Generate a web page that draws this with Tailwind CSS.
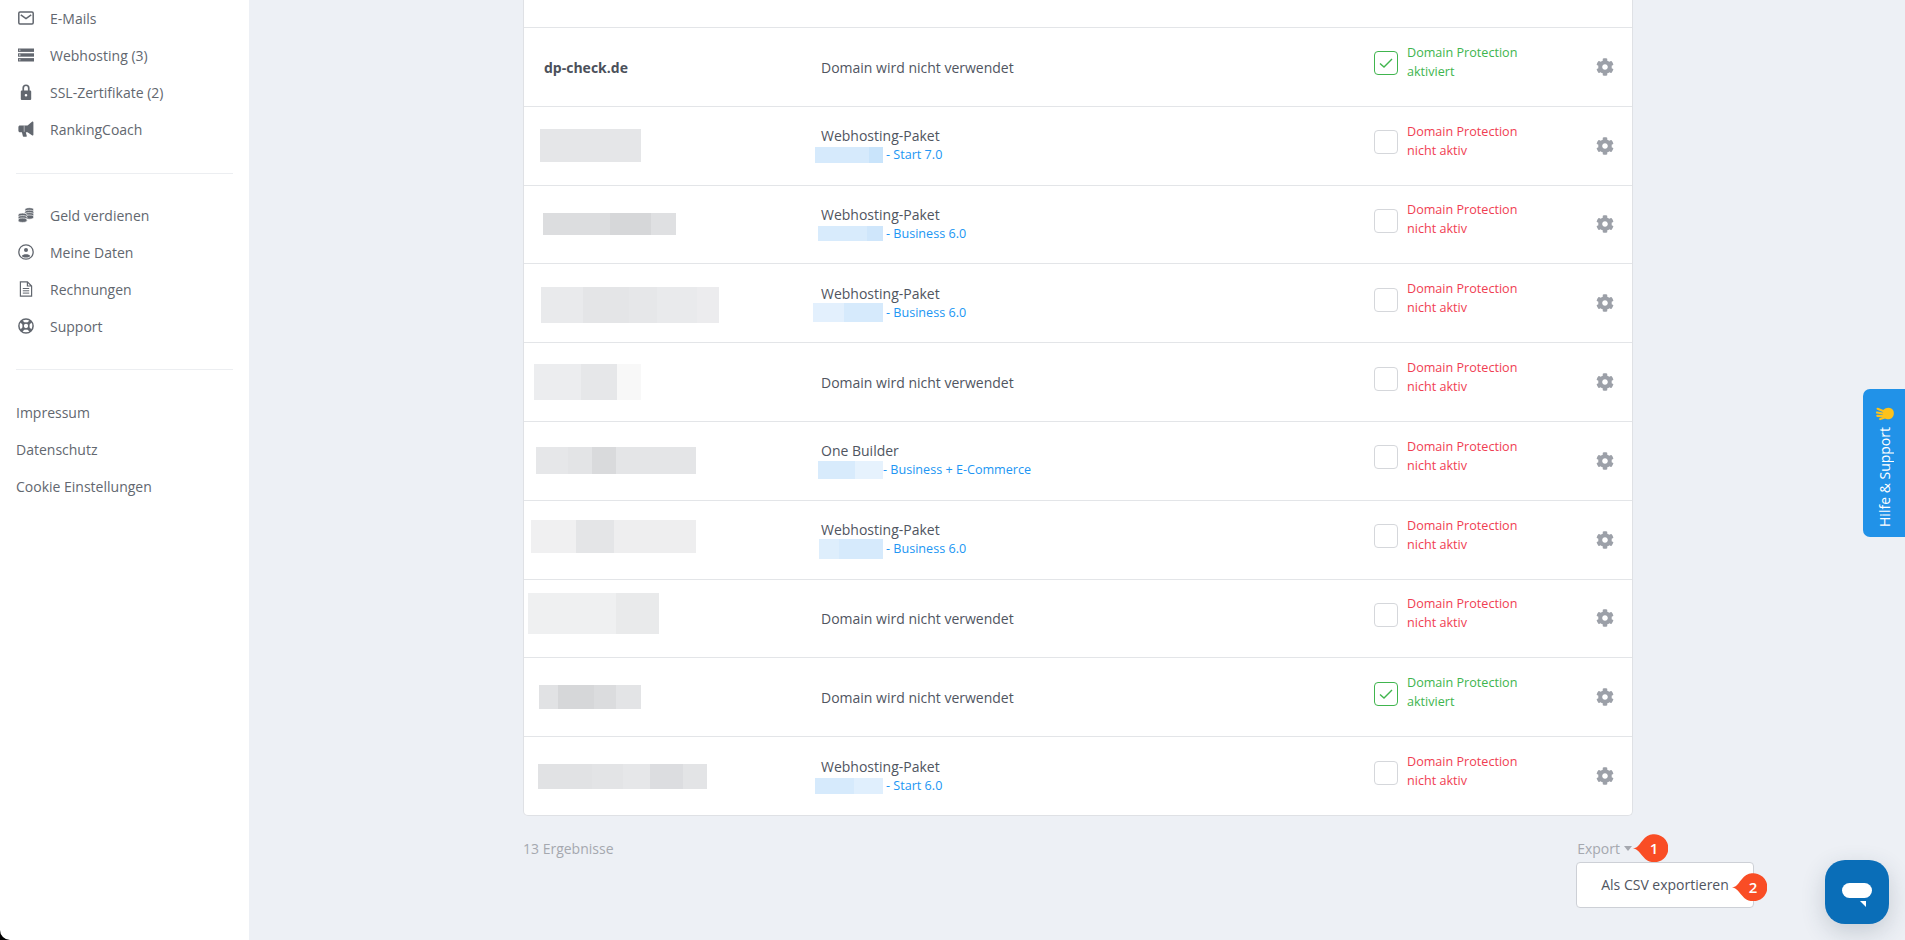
<!DOCTYPE html>
<html lang="de"><head><meta charset="utf-8"><title>Domains</title>
<script src="https://cdn.jsdelivr.net/npm/@tailwindcss/browser@4"></script></head>
<body class="m-0 overflow-hidden bg-[#edf0f5] font-['Open_Sans','Noto_Sans',sans-serif] text-[#50555f]">
<svg class="absolute h-0 w-0"><defs><symbol id="gear" viewBox="0 0 512 512"><path d="M487.400 315.700l-42.600-24.600c4.300-23.200 4.300-47 0-70.200l42.600-24.600c4.900-2.800 7.100-8.600 5.500-14-11.100-35.600-30-67.800-54.700-94.600-3.800-4.100-10-5.100-14.800-2.300L380.800 110c-17.900-15.400-38.500-27.300-60.800-35.100V25.800c0-5.600-3.900-10.500-9.400-11.700-36.700-8.200-74.300-7.800-109.200 0-5.500 1.200-9.400 6.100-9.400 11.700V75c-22.200 7.900-42.800 19.800-60.800 35.100L88.700 85.500c-4.900-2.800-11-1.900-14.800 2.300-24.700 26.700-43.600 58.900-54.700 94.600-1.700 5.400.6 11.200 5.500 14L67.300 221c-4.300 23.200-4.300 47 0 70.200l-42.600 24.600c-4.900 2.800-7.100 8.600-5.500 14 11.100 35.600 30 67.800 54.700 94.600 3.800 4.100 10 5.100 14.800 2.300l42.600-24.600c17.900 15.400 38.500 27.300 60.800 35.100v49.200c0 5.600 3.900 10.500 9.400 11.700 36.700 8.200 74.300 7.800 109.200 0 5.500-1.200 9.400-6.100 9.400-11.700v-49.200c22.200-7.900 42.800-19.800 60.800-35.100l42.600 24.600c4.900 2.800 11 1.900 14.800-2.300 24.700-26.700 43.600-58.900 54.700-94.600 1.500-5.500-.7-11.300-5.600-14.100zM256 336c-44.100 0-80-35.900-80-80s35.900-80 80-80 80 35.900 80 80-35.900 80-80 80z"/></symbol></defs></svg>
<div class="relative flex h-[940px] w-[1905px] overflow-hidden">
  <aside class="w-[249px] shrink-0 bg-white px-4 pt-[0.5px] text-[14px] text-[#62676f]">
    <nav class="flex flex-col">
      <a class="flex h-[37px] items-center gap-4 pb-[2px]"><svg class="ml-0.5 h-4 w-4" viewBox="0 0 16 16" fill="none" stroke="#62676f" stroke-width="1.500"><rect x=".8" y="2" width="14.400" height="12" rx="1.200"/><path d="M2.800 4.800 8 8.600l5.200-3.800"/></svg>E-Mails</a>
      <a class="flex h-[37px] items-center gap-4 pb-[2px]"><svg class="ml-0.5 h-4 w-4" viewBox="0 0 16 16" fill="#62676f"><rect y="1.500" width="16" height="3.400"/><rect y="6.300" width="16" height="3.400"/><rect y="11.100" width="16" height="3.400"/><path d="M1 2.800h1.500v.8H1zM1 7.600h1.500v.8H1zM1 12.400h1.500v.8H1z" fill="#fff"/></svg>Webhosting (3)</a>
      <a class="flex h-[37px] items-center gap-4 pb-[2px]"><svg class="ml-0.5 h-4 w-4" viewBox="0 0 16 16" fill="#62676f"><path fill-rule="evenodd" d="M4.400 6.500V4a3.600 3.600 0 0 1 7.200 0v2.500h.6a1 1 0 0 1 1 1V15a1 1 0 0 1-1 1H3.800a1 1 0 0 1-1-1V7.500a1 1 0 0 1 1-1zm1.700 0h3.800V4a1.900 1.900 0 0 0-3.800 0zM8 10a1.300 1.300 0 1 0 0 2.600A1.300 1.300 0 0 0 8 10z"/></svg>SSL-Zertifikate (2)</a>
      <a class="flex h-[37px] items-center gap-4 pb-[2px]"><svg class="ml-0.5 h-4 w-4" viewBox="0 0 16 16" fill="#62676f"><path d="M14.300.6c.5-.2 1.100.1 1.100.7v12.500c0 .7-.6 1-1.100.7L9.500 11.200H7.800l1 3.800c.1.400-.2.700-.6.700H5.500c-.3 0-.5-.2-.6-.5l-1-4H2c-.9 0-1.600-.7-1.600-1.500V6c0-.8.7-1.500 1.600-1.500h7.500z"/><path d="M6.200 4.500v6.300" stroke="#fff" stroke-width=".5"/></svg>RankingCoach</a>
    </nav>
    <div class="mt-[24px] h-px bg-[#eceef1]"></div>
    <nav class="mt-[24px] flex flex-col">
      <a class="flex h-[37px] items-center gap-4 pb-[2px]"><svg class="ml-0.5 h-4 w-4" viewBox="0 0 16 16" fill="#62676f" stroke="#fff" stroke-width=".7"><ellipse cx="11.300" cy="3" rx="4.500" ry="2.300"/><ellipse cx="11.300" cy="5.300" rx="4.500" ry="2.100"/><ellipse cx="11.300" cy="7.700" rx="4.500" ry="2.100"/><ellipse cx="11.300" cy="10.100" rx="4.500" ry="2.100"/><ellipse cx="4.600" cy="8.300" rx="4.500" ry="2.200"/><ellipse cx="4.600" cy="10.700" rx="4.500" ry="2.100"/><ellipse cx="4.600" cy="13.200" rx="4.500" ry="2.200"/></svg>Geld verdienen</a>
      <a class="flex h-[37px] items-center gap-4 pb-[2px]"><svg class="ml-0.5 h-4 w-4" viewBox="0 0 16 16" fill="none" stroke="#62676f" stroke-width="1.300"><circle cx="8" cy="8" r="7.200"/><circle cx="8" cy="6" r="2" fill="#62676f" stroke="none"/><path d="M3.800 12c1-2.200 7.400-2.200 8.400 0-1.500 2-6.900 2-8.400 0z" fill="#62676f" stroke="none"/></svg>Meine Daten</a>
      <a class="flex h-[37px] items-center gap-4 pb-[2px]"><svg class="ml-0.5 h-4 w-4" viewBox="0 0 16 16" fill="none" stroke="#62676f" stroke-width="1.200"><path d="M2.400.8h7l4.200 4.200v10.200H2.400zM9.400.8V5h4.200"/><path d="M4.800 7.500h6.400M4.800 9.800h6.400M4.800 12.100h6.400" stroke-width="1"/></svg>Rechnungen</a>
      <a class="flex h-[37px] items-center gap-4 pb-[2px]"><svg class="ml-0.5 h-4 w-4" viewBox="0 0 16 16" fill="none" stroke="#62676f" stroke-width="1.500"><circle cx="8" cy="8" r="7.100"/><circle cx="8" cy="8" r="2.900"/><path d="M3 3l3 3M13 3l-3 3M3 13l3-3M13 13l-3-3" stroke-width="3"/></svg>Support</a>
    </nav>
    <div class="mt-[23.500px] h-px bg-[#eceef1]"></div>
    <nav class="mt-[24.500px] flex flex-col">
      <a class="flex h-[37px] items-center pb-[2px]">Impressum</a>
      <a class="flex h-[37px] items-center pb-[2px]">Datenschutz</a>
      <a class="flex h-[37px] items-center pb-[2px]">Cookie Einstellungen</a>
    </nav>
  </aside>

  <main class="flex-1 pl-[274px]">
    <section class="w-[1110px] rounded-b-[5px] border-x border-b border-[#dfe1e5] bg-white">
      <div class="h-[27px]"></div>

      <div class="grid h-[78.800px] grid-cols-[297px_553px_1fr_auto] items-center border-t border-[#e3e5e8] pr-[18px] text-[14px]">
        <b class="pl-[20px] pt-px font-bold text-[#4b505a]">dp-check.de</b>
        <span class="pt-px">Domain wird nicht verwendet</span>
        <div class="flex items-center gap-[9px] pb-[7px]"><span class="flex h-6 w-6 items-center justify-center rounded-[4px] border border-[#40b54e]"><svg class="h-[14px] w-[14px]" viewBox="0 0 14 14" fill="none" stroke="#40b54e" stroke-width="1.400"><path d="M1 7.500 5 11 13 3"/></svg></span><span class="pb-[3px] text-[12.600px] leading-[19px] text-[#40b54e]">Domain Protection<br>aktiviert</span></div>
        <svg class="h-[18px] w-[18px] fill-[#9ca0a8]"><use href="#gear"/></svg>
      </div>

      <div class="grid h-[78.800px] grid-cols-[297px_553px_1fr_auto] items-center border-t border-[#e3e5e8] pr-[18px] text-[14px]">
        <div class="ml-[16px] flex h-[33px] w-[101px]"><i class="flex-1 bg-[#e5e6e8]"></i></div>
        <div class="leading-[18px]">Webhosting-Paket<div class="-ml-[6px] mt-px flex h-[18px] items-center gap-[3px] text-[12.600px] text-[#2196f3]"><span class="flex h-4 w-[68px]"><i class="w-[54px] bg-[#d6eafc]"></i><i class="flex-1 bg-[#c9e4fb]"></i></span>- Start 7.0</div></div>
        <div class="flex items-center gap-[9px] pb-[7px]"><span class="h-6 w-6 rounded-[4px] border border-[#d5d7db]"></span><span class="pb-[3px] text-[12.600px] leading-[19px] text-[#f03e52]">Domain Protection<br>nicht aktiv</span></div>
        <svg class="h-[18px] w-[18px] fill-[#9ca0a8]"><use href="#gear"/></svg>
      </div>

      <div class="grid h-[78.800px] grid-cols-[297px_553px_1fr_auto] items-center border-t border-[#e3e5e8] pr-[18px] text-[14px]">
        <div class="ml-[19px] flex h-[22px] w-[133px]"><i class="w-[67px] bg-[#dcdddf]"></i><i class="w-[41px] bg-[#d6d7d9]"></i><i class="flex-1 bg-[#dfe0e2]"></i></div>
        <div class="leading-[18px]">Webhosting-Paket<div class="-ml-[3px] mt-px flex h-[18px] items-center gap-[3px] text-[12.600px] text-[#2196f3]"><span class="flex h-[15px] w-[65px]"><i class="w-[49px] bg-[#d8ebfc]"></i><i class="flex-1 bg-[#cfe6fb]"></i></span>- Business 6.0</div></div>
        <div class="flex items-center gap-[9px] pb-[7px]"><span class="h-6 w-6 rounded-[4px] border border-[#d5d7db]"></span><span class="pb-[3px] text-[12.600px] leading-[19px] text-[#f03e52]">Domain Protection<br>nicht aktiv</span></div>
        <svg class="h-[18px] w-[18px] fill-[#9ca0a8]"><use href="#gear"/></svg>
      </div>

      <div class="grid h-[78.800px] grid-cols-[297px_553px_1fr_auto] items-center border-t border-[#e3e5e8] pr-[18px] text-[14px]">
        <div class="ml-[17px] mt-[3px] flex h-[36px] w-[178px]"><i class="w-[42px] bg-[#e9eaec]"></i><i class="w-[46px] bg-[#e4e5e7]"></i><i class="w-[28px] bg-[#e6e7e9]"></i><i class="w-[40px] bg-[#e9eaec]"></i><i class="flex-1 bg-[#ececee]"></i></div>
        <div class="leading-[18px]">Webhosting-Paket<div class="-ml-[8px] mt-px flex h-[18px] items-center gap-[3px] text-[12.600px] text-[#2196f3]"><span class="flex h-[19px] w-[70px]"><i class="w-[31px] bg-[#e3f0fd]"></i><i class="flex-1 bg-[#d6eafc]"></i></span>- Business 6.0</div></div>
        <div class="flex items-center gap-[9px] pb-[7px]"><span class="h-6 w-6 rounded-[4px] border border-[#d5d7db]"></span><span class="pb-[3px] text-[12.600px] leading-[19px] text-[#f03e52]">Domain Protection<br>nicht aktiv</span></div>
        <svg class="h-[18px] w-[18px] fill-[#9ca0a8]"><use href="#gear"/></svg>
      </div>

      <div class="grid h-[78.800px] grid-cols-[297px_553px_1fr_auto] items-center border-t border-[#e3e5e8] pr-[18px] text-[14px]">
        <div class="ml-[10px] flex h-[36px] w-[107px]"><i class="w-[47px] bg-[#ecedef]"></i><i class="w-[36px] bg-[#e6e7e9]"></i><i class="flex-1 bg-[#f8f8f8]"></i></div>
        <span>Domain wird nicht verwendet</span>
        <div class="flex items-center gap-[9px] pb-[7px]"><span class="h-6 w-6 rounded-[4px] border border-[#d5d7db]"></span><span class="pb-[3px] text-[12.600px] leading-[19px] text-[#f03e52]">Domain Protection<br>nicht aktiv</span></div>
        <svg class="h-[18px] w-[18px] fill-[#9ca0a8]"><use href="#gear"/></svg>
      </div>

      <div class="grid h-[78.800px] grid-cols-[297px_553px_1fr_auto] items-center border-t border-[#e3e5e8] pr-[18px] text-[14px]">
        <div class="ml-[12px] flex h-[27px] w-[160px]"><i class="w-[32px] bg-[#e6e7e9]"></i><i class="w-[24px] bg-[#e3e4e6]"></i><i class="w-[24px] bg-[#d9dadc]"></i><i class="flex-1 bg-[#e4e5e7]"></i></div>
        <div class="leading-[18px]">One Builder<div class="-ml-[3px] mt-px flex h-[18px] items-center text-[12.600px] text-[#2196f3]"><span class="flex h-[18px] w-[65px]"><i class="w-[37px] bg-[#d8ebfc]"></i><i class="flex-1 bg-[#e6f2fd]"></i></span>- Business + E-Commerce</div></div>
        <div class="flex items-center gap-[9px] pb-[7px]"><span class="h-6 w-6 rounded-[4px] border border-[#d5d7db]"></span><span class="pb-[3px] text-[12.600px] leading-[19px] text-[#f03e52]">Domain Protection<br>nicht aktiv</span></div>
        <svg class="h-[18px] w-[18px] fill-[#9ca0a8]"><use href="#gear"/></svg>
      </div>

      <div class="grid h-[78.800px] grid-cols-[297px_553px_1fr_auto] items-center border-t border-[#e3e5e8] pr-[18px] text-[14px]">
        <div class="mb-[6px] ml-[7px] flex h-[33px] w-[165px]"><i class="w-[45px] bg-[#f0f0f1]"></i><i class="w-[38px] bg-[#e4e5e7]"></i><i class="flex-1 bg-[#eeeeef]"></i></div>
        <div class="leading-[18px]">Webhosting-Paket<div class="-ml-[2px] mt-px flex h-[18px] items-center gap-[3px] text-[12.600px] text-[#2196f3]"><span class="flex h-5 w-[64px]"><i class="w-[20px] bg-[#deeefc]"></i><i class="flex-1 bg-[#d6eafc]"></i></span>- Business 6.0</div></div>
        <div class="flex items-center gap-[9px] pb-[7px]"><span class="h-6 w-6 rounded-[4px] border border-[#d5d7db]"></span><span class="pb-[3px] text-[12.600px] leading-[19px] text-[#f03e52]">Domain Protection<br>nicht aktiv</span></div>
        <svg class="h-[18px] w-[18px] fill-[#9ca0a8]"><use href="#gear"/></svg>
      </div>

      <div class="grid h-[78.800px] grid-cols-[297px_553px_1fr_auto] items-center border-t border-[#e3e5e8] pr-[18px] text-[14px]">
        <div class="mb-[9px] ml-[4px] flex h-[41px] w-[131px]"><i class="w-[88px] bg-[#eff0f1]"></i><i class="flex-1 bg-[#e9eaeb]"></i></div>
        <span>Domain wird nicht verwendet</span>
        <div class="flex items-center gap-[9px] pb-[7px]"><span class="h-6 w-6 rounded-[4px] border border-[#d5d7db]"></span><span class="pb-[3px] text-[12.600px] leading-[19px] text-[#f03e52]">Domain Protection<br>nicht aktiv</span></div>
        <svg class="h-[18px] w-[18px] fill-[#9ca0a8]"><use href="#gear"/></svg>
      </div>

      <div class="grid h-[78.800px] grid-cols-[297px_553px_1fr_auto] items-center border-t border-[#e3e5e8] pr-[18px] text-[14px]">
        <div class="ml-[15px] flex h-[24px] w-[102px]"><i class="w-[19px] bg-[#e1e2e4]"></i><i class="w-[36px] bg-[#d6d7d9]"></i><i class="w-[22px] bg-[#dbdcde]"></i><i class="flex-1 bg-[#e3e4e6]"></i></div>
        <span>Domain wird nicht verwendet</span>
        <div class="flex items-center gap-[9px] pb-[7px]"><span class="flex h-6 w-6 items-center justify-center rounded-[4px] border border-[#40b54e]"><svg class="h-[14px] w-[14px]" viewBox="0 0 14 14" fill="none" stroke="#40b54e" stroke-width="1.400"><path d="M1 7.500 5 11 13 3"/></svg></span><span class="pb-[3px] text-[12.600px] leading-[19px] text-[#40b54e]">Domain Protection<br>aktiviert</span></div>
        <svg class="h-[18px] w-[18px] fill-[#9ca0a8]"><use href="#gear"/></svg>
      </div>

      <div class="grid h-[78.800px] grid-cols-[297px_553px_1fr_auto] items-center border-t border-[#e3e5e8] pr-[18px] text-[14px]">
        <div class="ml-[14px] flex h-[25px] w-[169px]"><i class="w-[54px] bg-[#e1e2e4]"></i><i class="w-[31px] bg-[#e3e4e6]"></i><i class="w-[27px] bg-[#e6e7e9]"></i><i class="w-[33px] bg-[#dcdde0]"></i><i class="flex-1 bg-[#e3e4e6]"></i></div>
        <div class="leading-[18px]">Webhosting-Paket<div class="-ml-[6px] mt-px flex h-[18px] items-center gap-[3px] text-[12.600px] text-[#2196f3]"><span class="flex h-4 w-[68px]"><i class="w-[39px] bg-[#d6eafc]"></i><i class="flex-1 bg-[#e0effd]"></i></span>- Start 6.0</div></div>
        <div class="flex items-center gap-[9px] pb-[7px]"><span class="h-6 w-6 rounded-[4px] border border-[#d5d7db]"></span><span class="pb-[3px] text-[12.600px] leading-[19px] text-[#f03e52]">Domain Protection<br>nicht aktiv</span></div>
        <svg class="h-[18px] w-[18px] fill-[#9ca0a8]"><use href="#gear"/></svg>
      </div>
    </section>

    <footer class="mt-[22px] flex w-[1110px] items-center justify-between text-[14px] text-[#a5a8af]">
      <span>13 Ergebnisse</span>
      <div class="relative mr-px flex items-center gap-[4px]">Export
        <svg class="h-[5px] w-[8px]" viewBox="0 0 8 5" fill="#a5a8af"><path d="M0 0h8L4 5z"/></svg>
        <div class="absolute left-[-1px] top-[24px] flex h-[46px] w-[178px] items-center rounded-[4px] border border-[#cdd0d6] bg-white pl-6 text-[#50555f]">Als CSV exportieren</div>
      </div>
    </footer>
  </main>

  <div class="absolute left-[1633px] top-[834px] flex h-[28px] w-[35px] items-center justify-end">
    <svg class="absolute inset-0" viewBox="0 0 35 28" fill="#f94d25"><path d="M0 14.500C5 14 7 9 10 6a14 14 0 1 1 0 16.500C7 19.500 5 15 0 14.500z"/></svg>
    <span class="relative w-[28px] text-center text-[15px] font-semibold text-white">1</span>
  </div>
  <div class="absolute left-[1732px] top-[873px] flex h-[28px] w-[35px] items-center justify-end">
    <svg class="absolute inset-0" viewBox="0 0 35 28" fill="#f94d25"><path d="M0 14.500C5 14 7 9 10 6a14 14 0 1 1 0 16.500C7 19.500 5 15 0 14.500z"/></svg>
    <span class="relative w-[28px] text-center text-[15px] font-semibold text-white">2</span>
  </div>

  <div class="absolute left-[1863px] top-[389px] flex h-[148px] w-[42px] flex-col items-center rounded-l-[7px] bg-[#2192e8] pl-[2px] pt-[17px] text-[14px] text-white">
    <svg class="h-[15px] w-[19px]" viewBox="0 0 18 13"><g stroke="#fcc21b" stroke-width="2" stroke-linecap="round"><path d="M1.500 2 9 5M.8 5.500 9 7M1.200 8.700 9 9M4 11.800 9 10"/></g><path d="M7 3c3-3 8-2.500 9.500 1 1.200 3.500-.5 7.500-4 8-3 .4-6-1.500-6-4.500z" fill="#fcc21b"/></svg>
    <span class="mt-[6px] rotate-180 leading-none [writing-mode:vertical-rl]">Hilfe &amp; Support</span>
  </div>

  <div class="absolute left-[1825px] top-[860px] h-16 w-16 rounded-[20px] bg-[#0a6eb8] shadow-[0_8px_24px_rgba(40,60,80,0.2)]">
    <div class="absolute left-[17px] top-[23px] h-[15px] w-[30px] rounded-full bg-white"></div>
    <svg class="absolute left-[35px] top-[41px] h-[6px] w-[6px]" viewBox="0 0 6 6" fill="#fff"><path d="M0 0h6v6z"/></svg>
  </div>

  <svg class="absolute bottom-0 left-0 h-[10px] w-[10px]" viewBox="0 0 10 10" fill="#000"><path d="M0 0a10 10 0 0 0 10 10H0z"/></svg>
</div>
</body></html>
